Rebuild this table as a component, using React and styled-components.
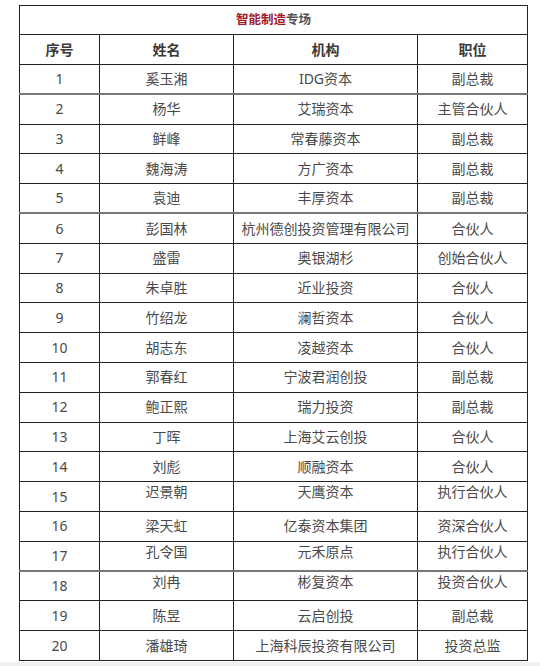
import React from 'react';
import styled, { createGlobalStyle } from 'styled-components';

const GlobalStyle = createGlobalStyle`
  html, body {
    margin: 0;
    padding: 0;
    background: #fff;
  }
  body {
    font-family: "Noto Sans", "Noto Sans CJK SC", sans-serif;
  }
`;

const Page = styled.div`
  width: 540px;
  height: 666px;
  padding: 5px 0 0 19px;
  box-sizing: border-box;
  background: linear-gradient(to bottom, #fff 662px, #f0f0f0 662px);
`;

const Table = styled.table`
  width: 508px;
  border-collapse: collapse;
  table-layout: fixed;
  color: #4a4a4a;
  font-size: 14px;
  line-height: 18px;
  border: 1px solid #333;
  border-top-color: #777;
`;

const Col = styled.col`
  width: ${(p) => p.$w}px;
`;

const TitleCell = styled.td`
  height: 28px;
  padding: 0;
  text-align: center;
  font-size: 12.5px;
  font-weight: bold;
  color: #555;
  border: 1px solid #222;
  .hl {
    color: #a3192c;
  }
`;

const HeadCell = styled.th`
  height: 29px;
  padding: 0;
  font-size: 14px;
  font-weight: bold;
  color: #3a3a3a;
  text-align: center;
  border: 1px solid #222;
`;

const Row = styled.tr`
  height: 29.8px;
`;

const Cell = styled.td`
  padding: ${(p) => (p.$raised ? '1px 0 0' : '0')};
  text-align: center;
  vertical-align: ${(p) => (p.$raised ? 'top' : 'middle')};
  white-space: nowrap;
  border: 1px solid #222;
  border-bottom: ${(p) => (p.$thick ? '2px solid #777' : '1px solid #222')};
`;

const rows = [
  ['奚玉湘', 'IDG资本', '副总裁'],
  ['杨华', '艾瑞资本', '主管合伙人'],
  ['鲜峰', '常春藤资本', '副总裁'],
  ['魏海涛', '方广资本', '副总裁'],
  ['袁迪', '丰厚资本', '副总裁'],
  ['彭国林', '杭州德创投资管理有限公司', '合伙人'],
  ['盛雷', '奥银湖杉', '创始合伙人'],
  ['朱卓胜', '近业投资', '合伙人'],
  ['竹绍龙', '澜哲资本', '合伙人'],
  ['胡志东', '凌越资本', '合伙人'],
  ['郭春红', '宁波君润创投', '副总裁'],
  ['鲍正熙', '瑞力投资', '副总裁'],
  ['丁晖', '上海艾云创投', '合伙人'],
  ['刘彪', '顺融资本', '合伙人'],
  ['迟景朝', '天鹰资本', '执行合伙人'],
  ['梁天虹', '亿泰资本集团', '资深合伙人'],
  ['孔令国', '元禾原点', '执行合伙人'],
  ['刘冉', '彬复资本', '投资合伙人'],
  ['陈昱', '云启创投', '副总裁'],
  ['潘雄琦', '上海科辰投资有限公司', '投资总监'],
];

const raisedRows = [15, 17, 18];
const thickRows = [1, 5, 17];

export default function App() {
  return (
    <Page>
      <GlobalStyle />
      <Table>
        <colgroup>
          <Col $w={80} />
          <Col $w={134} />
          <Col $w={184} />
          <Col $w={110} />
        </colgroup>
        <tbody>
          <tr>
            <TitleCell colSpan={4}>
              <span className="hl">智能制造</span>专场
            </TitleCell>
          </tr>
          <tr>
            <HeadCell>序号</HeadCell>
            <HeadCell>姓名</HeadCell>
            <HeadCell>机构</HeadCell>
            <HeadCell>职位</HeadCell>
          </tr>
          {rows.map(([name, org, role], i) => {
            const n = i + 1;
            const raised = raisedRows.includes(n);
            const thick = thickRows.includes(n);
            return (
              <Row key={n}>
                <Cell $thick={thick}>{n}</Cell>
                <Cell $thick={thick} $raised={raised}>{name}</Cell>
                <Cell $thick={thick} $raised={raised}>{org}</Cell>
                <Cell $thick={thick} $raised={raised}>{role}</Cell>
              </Row>
            );
          })}
        </tbody>
      </Table>
    </Page>
  );
}
